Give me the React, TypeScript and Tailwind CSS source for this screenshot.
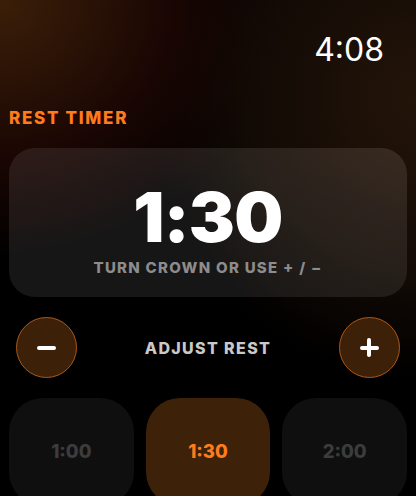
import React, { useState } from 'react';

const presets = ['1:00', '1:30', '2:00'];

const RestTimer: React.FC = () => {
  const [selected, setSelected] = useState<string>('1:30');

  return (
    <div
      className="relative h-[496px] w-[416px] overflow-hidden bg-black bg-[radial-gradient(ellipse_90%_70%_at_0%_0%,#3b1f08_0%,#1a0603_45%,transparent_75%),radial-gradient(ellipse_80%_70%_at_100%_20%,#231409_0%,#120a05_50%,transparent_80%)]"
      style={{ fontFamily: 'Inter, "Noto Sans", sans-serif' }}
    >
      {/* Status bar */}
      <div className="flex justify-end pr-[32px] pt-[31px]">
        <span className="text-[32px] leading-[38px] font-normal text-white">4:08</span>
      </div>

      {/* Title */}
      <h1 className="mt-[39px] pl-[9px] text-[17px] leading-[20px] font-extrabold tracking-[0.1em] text-[#ff7b1c]">
        REST TIMER
      </h1>

      {/* Timer card */}
      <div className="mx-[9px] mt-[20px] flex h-[149px] flex-col items-center rounded-[26px] bg-white/[0.085] bg-[linear-gradient(200deg,rgba(255,170,110,0.035)_0%,transparent_45%)]">
        <div className="mt-[29px] text-[69px] leading-[80px] font-black tracking-[-0.01em] text-white">
          1:30
        </div>
        <div className="mt-[2px] text-[15px] leading-[18px] font-extrabold tracking-[0.085em] text-[#8c8c8c]">
          TURN CROWN OR USE + / −
        </div>
      </div>

      {/* Adjust row */}
      <div className="mt-[20px] flex items-center justify-between px-[16px]">
        <button className="flex h-[61px] w-[61px] items-center justify-center rounded-full border-[1.5px] border-[#a9581b] bg-[#3d2008]">
          <span className="block h-[4px] w-[19px] rounded-full bg-white" />
        </button>
        <span className="text-[16px] leading-[18px] font-extrabold tracking-[0.085em] text-[#c9c9c9]">
          ADJUST REST
        </span>
        <button className="relative flex h-[61px] w-[61px] items-center justify-center rounded-full border-[1.5px] border-[#a9581b] bg-[#3d2008]">
          <span className="absolute h-[4px] w-[19px] rounded-full bg-white" />
          <span className="absolute h-[19px] w-[4px] rounded-full bg-white" />
        </button>
      </div>

      {/* Presets */}
      <div className="mt-[20px] grid grid-cols-3 gap-[12px] px-[9px]">
        {presets.map((preset) => (
          <button
            key={preset}
            onClick={() => setSelected(preset)}
            className={`flex h-[108px] items-center justify-center rounded-[34px] text-[18.5px] font-extrabold ${
              selected === preset
                ? 'bg-[#3d2108] text-[#ff7b1c]'
                : 'bg-[#0f0f0f] text-[#3c3c3c]'
            }`}
          >
            {preset}
          </button>
        ))}
      </div>
    </div>
  );
};

export default function App() {
  return <RestTimer />;
}
